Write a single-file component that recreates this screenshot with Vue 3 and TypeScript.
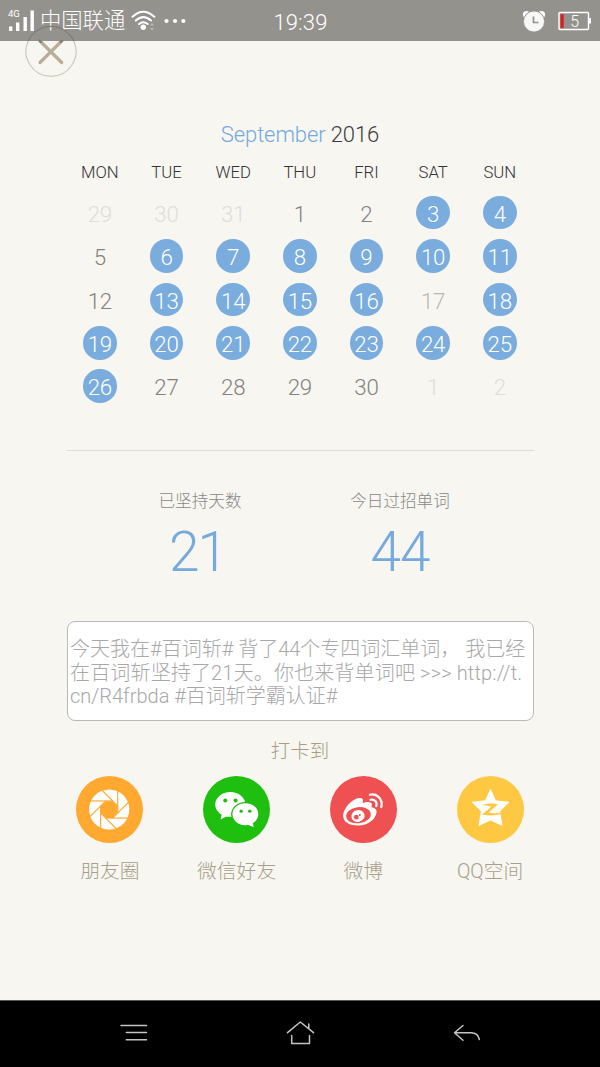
<script setup lang="ts">
interface Day {
  n: number
  state: 'off' | 'plain' | 'dim' | 'done'
}

const weekdays: string[] = ['MON', 'TUE', 'WED', 'THU', 'FRI', 'SAT', 'SUN']
const missed = new Set<number>([1, 2, 5, 12, 27, 28, 29, 30])

const days: Day[] = [
  ...[29, 30, 31].map((n): Day => ({ n, state: 'off' })),
  ...Array.from({ length: 30 }, (_, i): Day => {
    const n = i + 1
    return { n, state: n === 17 ? 'dim' : missed.has(n) ? 'plain' : 'done' }
  }),
  ...[1, 2].map((n): Day => ({ n, state: 'off' })),
]

const message: string[] = [
  '今天我在#百词斩# 背了44个专四词汇单词， 我已经',
  '在百词斩坚持了21天。你也来背单词吧 >>> http://t.',
  'cn/R4frbda #百词斩学霸认证#',
]
const blades: number[] = [0, 45, 90, 135, 180, 225, 270, 315]
</script>

<template>
  <div class="screen">
    <header class="status">
      <svg class="signal" viewBox="0 0 28 24" width="28" height="24">
        <text x="0" y="8.4" class="net">4G</text>
        <path d="M1 17.5h3.4v4.5H1zM8 13.5h3.4V22H8zM15.500 8h3.400v14h-3.400zM22.500 1.500h3.400V22h-3.400z" fill="#fff" />
      </svg>
      <span class="carrier">中国联通</span>
      <svg class="wifi" viewBox="0 0 26 22" width="26" height="22">
        <g fill="none" stroke="#fff" stroke-width="2" stroke-linecap="round">
          <path d="M1.500 6.800Q12.300-3.200 23.300 6.800" />
          <path d="M4.800 10.600Q12.300 3.700 20 10.600" />
          <path d="M8 14Q12.300 10.400 16.700 14" />
        </g>
        <circle cx="12.300" cy="17.300" r="2.700" fill="#fff" />
        <path d="M19 15.500l2-2.500 2 2.500zM19 18l2 2.500 2-2.500z" fill="#bdbcb8" />
      </svg>
      <svg class="dots" viewBox="0 0 22 6" width="22" height="6" fill="#fff">
        <circle cx="2.500" cy="3" r="2.100" /><circle cx="11" cy="3" r="2.100" /><circle cx="19.300" cy="3" r="2.100" />
      </svg>
      <span class="time">19:39</span>
      <svg class="alarm" viewBox="0 0 24 22" width="24" height="22">
        <circle cx="4.500" cy="4.500" r="3.600" fill="#fff" /><circle cx="19.500" cy="4.500" r="3.600" fill="#fff" />
        <circle cx="12" cy="11.500" r="10.600" fill="#f7f7f5" stroke="#94928d" stroke-width="1" />
        <path d="M11.500 6.500v6h5" fill="none" stroke="#94928d" stroke-width="1.700" />
      </svg>
      <svg class="battery" viewBox="0 0 34 20" width="34" height="20">
        <rect x="1" y="1.500" width="29.500" height="17" rx="1" fill="none" stroke="#fff" stroke-width="1.400" />
        <path d="M31 7h2v5.500h-2z" fill="#fff" />
        <path d="M2.500 3.200h3.200v13.800H2.500z" fill="#d81e1e" />
        <text x="12.300" y="16" class="level">5</text>
      </svg>
      <svg class="close" viewBox="0 0 52 52" width="52" height="52">
        <path d="M3.100 16.300A25 25 0 1 0 48.900 16.300" fill="none" stroke="#cdc8bb" stroke-width="1.200" />
        <path d="M3.100 16.300A25 25 0 0 1 48.900 16.300" fill="none" stroke="#807d76" stroke-width="1.200" />
        <path d="M15 16L36.700 37.500M36.700 16L15 37.500" stroke="#b8ad99" stroke-width="3.200" stroke-linecap="round" />
        <path d="M14.500 15.500L16 16.700M37.200 15.500L35.700 16.700" stroke="#827c70" stroke-width="2.400" stroke-linecap="round" />
      </svg>
    </header>

    <main>
      <h1><span class="month">September</span> <span class="year">2016</span></h1>
      <div class="week">
        <span v-for="w in weekdays" :key="w">{{ w }}</span>
      </div>
      <div class="days">
        <div v-for="(d, i) in days" :key="i" class="cell">
          <span class="day" :class="d.state">{{ d.n }}</span>
        </div>
      </div>

      <section class="stats">
        <div class="stat"><span class="label">已坚持天数</span><b class="first">21</b></div>
        <div class="stat"><span class="label">今日过招单词</span><b>44</b></div>
      </section>

      <div class="message">
        <p v-for="(line, i) in message" :key="i" :class="'l' + i">{{ line }}</p>
      </div>

      <p class="share-title">打卡到</p>
      <section class="share">
        <div class="target">
          <svg viewBox="51 32 200 200">
            <circle cx="151" cy="132" r="100" fill="#ffa931" />
            <circle cx="150" cy="132" r="60" fill="#fff" />
            <path d="M160 107L175 122V142L160 157H140L125 142V122L140 107z" fill="#ffa931" />
            <path v-for="a in blades" :key="a" d="M161 106.500H88" :transform="`rotate(${a} 150 132)`" stroke="#ffa931" stroke-width="3.500" />
          </svg>
          <span>朋友圈</span>
        </div>
        <div class="target">
          <svg viewBox="429.500 32 200 200">
            <circle cx="529.500" cy="132" r="100" fill="#1fbf0f" />
            <ellipse cx="511" cy="117" rx="45" ry="37" fill="#fff" />
            <path d="M486 143L482 162L503 151z" fill="#fff" />
            <ellipse cx="555.500" cy="146" rx="42" ry="36.500" fill="#1fbf0f" />
            <ellipse cx="556" cy="146" rx="38.500" ry="33" fill="#fff" />
            <path d="M560 177L581 184L577 168z" fill="#fff" />
            <g fill="#1fbf0f">
              <circle cx="496" cy="105" r="6" /><circle cx="527" cy="105" r="6" />
              <circle cx="543.500" cy="137" r="5" /><circle cx="569" cy="137" r="5" />
            </g>
          </svg>
          <span>微信好友</span>
        </div>
        <div class="target">
          <svg viewBox="61 32 200 200">
            <circle cx="161" cy="132" r="100" fill="#ef5052" />
            <path d="M147 98C158 96 162 102 158 113C172 107 187 108 186 118C186 121 184 123 185 125C196 127 201 132 200 140C197 162 174 179 146 180C119 181 100 169 100 151C100 130 126 101 147 98z" fill="#fff" />
            <ellipse cx="146" cy="149" rx="37" ry="24" fill="#ef5052" transform="rotate(-7 146 149)" />
            <ellipse cx="144.500" cy="151.500" rx="20" ry="17.500" fill="#fff" transform="rotate(-15 144.500 151.500)" />
            <circle cx="139.500" cy="155" r="7" fill="#ef5052" /><circle cx="150" cy="148.500" r="3" fill="#ef5052" />
            <g fill="none" stroke="#fff" stroke-width="6.500" stroke-linecap="round">
              <path d="M180 88C202 83 220 103 214 125" />
              <path d="M182 103C194 100 203 110 199 122" />
            </g>
          </svg>
          <span>微博</span>
        </div>
        <div class="target">
          <svg viewBox="440 32 200 200">
            <circle cx="540" cy="132" r="100" fill="#fec843" />
            <path d="M540 73L555 106L594 110L567 137L574 179L540 163L506 179L513 137L486 110L525 106z" fill="#fff" stroke="#fff" stroke-width="3" stroke-linejoin="round" />
            <path d="M514 119C530 113 550 112 562 117L534 141C546 144 562 144 580 141C564 150 538 152 515 147L542 124C533 120 523 119 514 119z" fill="#fec843" />
          </svg>
          <span>QQ空间</span>
        </div>
      </section>
    </main>

    <nav>
      <svg viewBox="0 0 400 66" width="400" height="66" fill="none" stroke="#c4c4c4" stroke-width="1.500" stroke-linecap="round" stroke-linejoin="round">
        <path d="M21 25.500H46.500M26.300 32.500H46.500M26.300 39.700H46.500" />
        <path d="M187.500 32.700L200.300 22L213.500 32.700M208.800 28V24M191.700 35.500V43.500H209.500V35.500" />
        <path d="M363 25.500L354.500 32.700L363 40.300M354.500 32.700H371Q378 32.700 379.300 39.500" />
      </svg>
    </nav>
  </div>
</template>

<style scoped>
.screen {
  display: flex;
  flex-direction: column;
  width: 600px;
  height: 1067px;
  overflow: hidden;
  background: #f7f6f1;
  font-family: Roboto, "Noto Sans CJK SC", sans-serif;
  font-weight: 300;
}
.status {
  position: relative;
  display: flex;
  align-items: center;
  box-sizing: border-box;
  height: 41px;
  flex: none;
  padding-left: 8px;
  background: #94928d;
  color: #fff;
}
.signal { margin-top: 1px; }
.net { font-size: 9.5px; font-weight: 400; fill: #fff; }
.carrier { margin-left: 4px; width: 88px; font-size: 21.300px; line-height: 41px; white-space: nowrap; }
.wifi { margin-left: 3px; margin-top: 1px; }
.dots { margin-left: 7px; }
.time { margin-left: 87.500px; width: 59.500px; font-size: 22px; line-height: 42px; padding-top: 4px; letter-spacing: .1px; }
.alarm { margin-left: 189px; }
.battery { margin-left: 12px; }
.level { font-size: 16px; fill: #fff; }
.close { position: absolute; left: 24.700px; top: 24.500px; }

main { flex: 1; padding: 0 66.500px; }
h1 {
  margin: 78px 0 0;
  height: 32px;
  line-height: 32px;
  text-align: center;
  font-size: 22px;
  font-weight: 300;
  letter-spacing: -.1px;
  white-space: nowrap;
}
.month { color: #76a9dc; }
.year { color: #3c3c3c; }
.week, .days { display: grid; grid-template-columns: repeat(7, 66.670px); }
.week { margin-top: 11px; height: 22px; line-height: 22px; text-align: center; font-size: 16.700px; color: #333; }
.days { margin-top: 7px; grid-auto-rows: 43.400px; }
.cell { display: flex; align-items: center; justify-content: center; }
.day {
  box-sizing: border-box;
  width: 33.600px;
  height: 33.600px;
  padding-top: 2px;
  border-radius: 50%;
  line-height: 33px;
  text-align: center;
  font-size: 22.300px;
  letter-spacing: -.2px;
}
.plain { color: #838280; }
.dim { color: #b9b8b4; }
.off { color: #dfdeda; }
.done { background: #7aacdd; color: #fff; }

.stats {
  display: flex;
  justify-content: center;
  margin-top: 42px;
  border-top: 1.500px solid #dddcd7;
  height: 170px;
}
.stat { width: 200px; display: flex; flex-direction: column; align-items: center; }
.label { margin-top: 39.500px; font-size: 16.600px; line-height: 24px; color: #8a8885; }
.stat b { margin-top: 7.500px; font-size: 55px; line-height: 60px; font-weight: 300; color: #76a9dc; letter-spacing: -1px; }
.stat .first { margin-left: -5px; letter-spacing: -2px; }

.message {
  box-sizing: border-box;
  width: 467px;
  height: 100px;
  padding: 16.500px 0 0 2.500px;
  border: 1px solid #b9b9b7;
  border-radius: 8px;
  background: #fff;
  color: #a8a8a8;
  font-size: 20px;
}
.message p { margin: 0; height: 23.400px; line-height: 23.400px; white-space: pre; }
.message .l1 { letter-spacing: .16px; }
.share-title { margin: 18px 0 0; line-height: 26px; text-align: center; font-size: 19.500px; color: #a89d84; }
.share { display: flex; justify-content: space-between; margin: 11px -20px 0; }
.target { width: 127px; display: flex; flex-direction: column; align-items: center; }
.target svg { width: 67px; height: 67px; }
.target span { margin-top: 15px; line-height: 28px; font-size: 19.800px; color: #a89e8b; white-space: nowrap; }

nav { flex: none; height: 67px; display: flex; justify-content: center; background: #000; border-top: 1px solid #555; box-sizing: border-box; }
nav svg { margin-top: -1px; }
</style>

<style>
body { margin: 0; }
</style>
